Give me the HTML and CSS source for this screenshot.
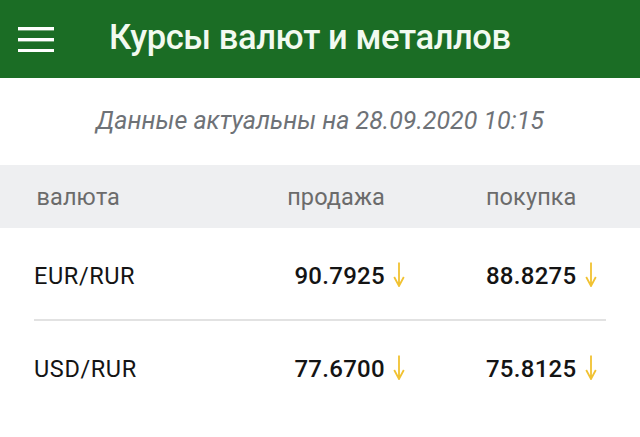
FILE: index.html
```html
<!DOCTYPE html>
<html lang="ru">
<head>
<meta charset="utf-8">
<link rel="stylesheet" href="styles.css">
</head>
<body>
<header class="appbar">
  <svg class="menu" width="36" height="26" viewBox="0 0 36 26"><rect x="0" y="1" width="36" height="3.4" fill="#fff"/><rect x="0" y="12" width="36" height="3.4" fill="#fff"/><rect x="0" y="23" width="36" height="3.4" fill="#fff"/></svg>
  <h1 class="title">Курсы валют и металлов</h1>
</header>
<p class="updated">Данные актуальны на 28.09.2020 10:15</p>
<div class="grid thead">
  <span class="name">валюта</span>
  <span class="val">продажа</span>
  <span></span>
  <span class="val">покупка</span>
  <span></span>
</div>
<div class="grid row">
  <span class="name">EUR/RUR</span>
  <span class="val num">90.7925</span>
  <svg class="arr" viewBox="0 0 12 25"><path d="M6 0.5V24M1.2 15L6 24L10.8 15" fill="none" stroke="#f1c232" stroke-width="1.8"/></svg>
  <span class="val num">88.8275</span>
  <svg class="arr" viewBox="0 0 12 25"><path d="M6 0.5V24M1.2 15L6 24L10.8 15" fill="none" stroke="#f1c232" stroke-width="1.8"/></svg>
</div>
<div class="divider"></div>
<div class="grid row">
  <span class="name">USD/RUR</span>
  <span class="val num">77.6700</span>
  <svg class="arr" viewBox="0 0 12 25"><path d="M6 0.5V24M1.2 15L6 24L10.8 15" fill="none" stroke="#f1c232" stroke-width="1.8"/></svg>
  <span class="val num">75.8125</span>
  <svg class="arr" viewBox="0 0 12 25"><path d="M6 0.5V24M1.2 15L6 24L10.8 15" fill="none" stroke="#f1c232" stroke-width="1.8"/></svg>
</div>
</body>
</html>
```
FILE: styles.css
```css
html, body { margin: 0; padding: 0; background: #fff; }
body {
  font-family: Roboto, "Noto Sans", sans-serif;
  width: 640px;
  height: 437px;
  overflow: hidden;
}
.appbar {
  height: 78px;
  background: #1b6d25;
  display: flex;
  align-items: flex-start;
  padding-left: 18px;
  box-sizing: border-box;
}
.menu { display: block; margin-top: 25.7px; }
.title {
  margin: 0 0 0 55px;
  color: #f2faf0;
  font-size: 34.5px;
  font-weight: 500;
  letter-spacing: -0.4px;
  line-height: 75px;
  white-space: nowrap;
}
.updated {
  margin: 0;
  height: 87px;
  line-height: 86px;
  text-align: center;
  font-style: italic;
  font-size: 25px;
  color: #6e7277;
}
.grid {
  display: grid;
  grid-template-columns: 1fr 120px 26px 165.5px 30px;
  padding: 0 33.5px 0 34px;
  align-items: center;
  box-sizing: border-box;
}
.thead {
  height: 63px;
  padding-top: 2px;
  line-height: 61px;
  background: #eeeff1;
  font-size: 23.5px;
  letter-spacing: 0.1px;
  color: #6b6b6b;
}
.thead .name { padding-left: 2.5px; }
.val { text-align: right; white-space: nowrap; }
.row {
  height: 91px;
  padding-top: 5px;
  line-height: 86px;
  color: #141414;
}
.row .name { font-size: 23.5px; letter-spacing: 0.6px; }
.num { font-size: 24px; font-weight: 500; letter-spacing: 0.3px; }
.arr { display: block; width: 12px; height: 25px; margin-left: 8px; margin-top: -4px; }
.divider { height: 2px; background: #e2e2e2; margin: 0 34px; }
```
